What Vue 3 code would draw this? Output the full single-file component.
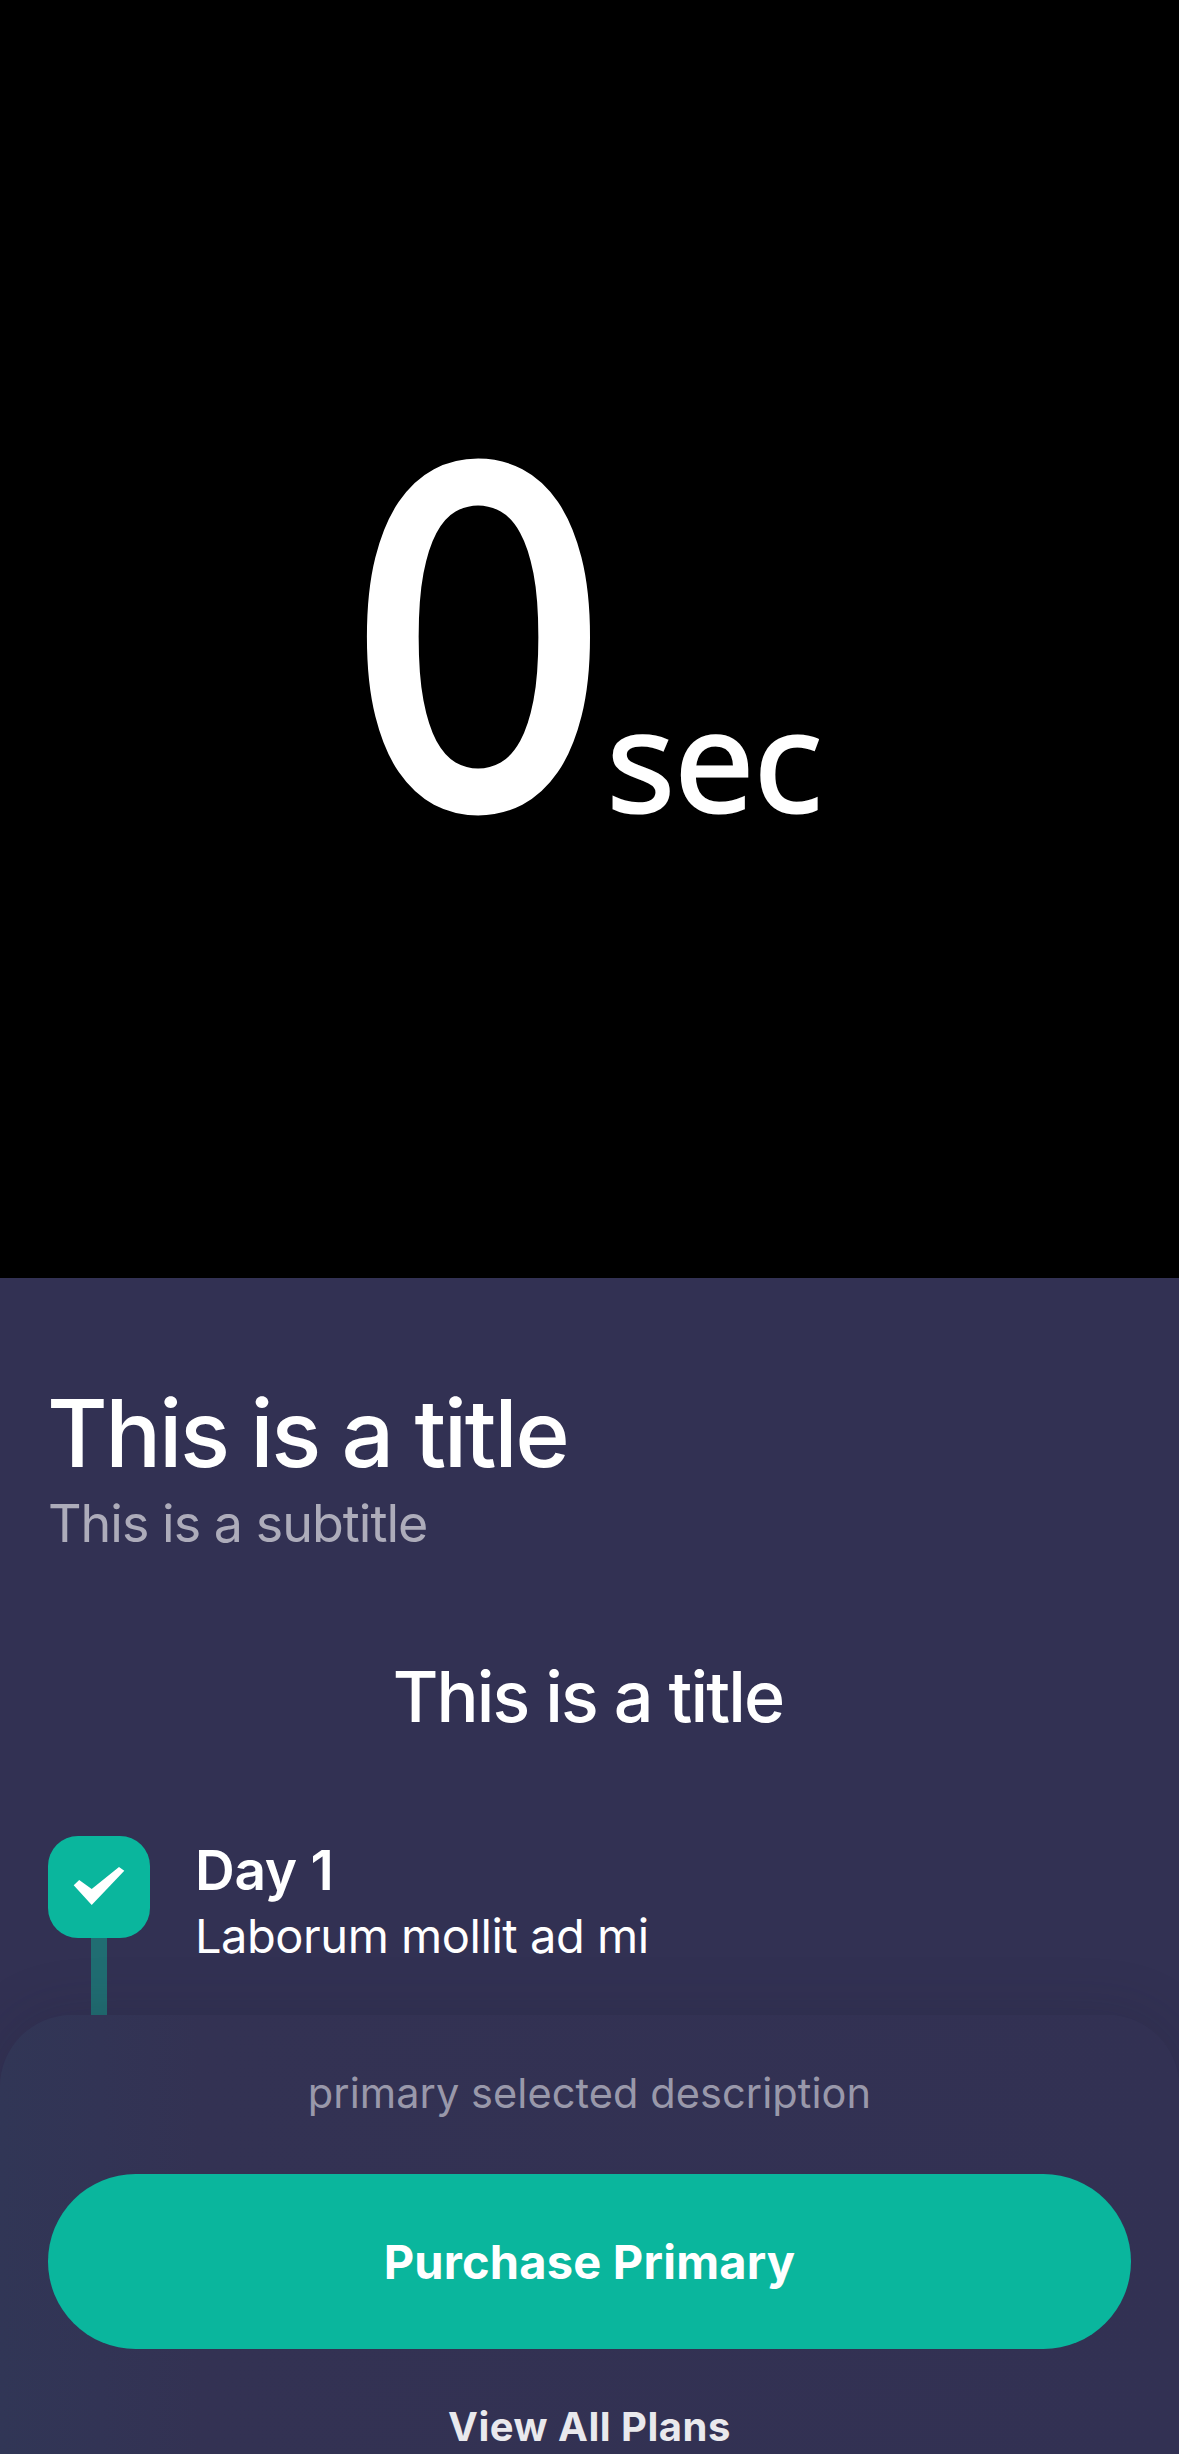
<script setup>
const steps = [{ title: 'Day 1', text: 'Laborum mollit ad mi' }]
</script>

<template>
  <main class="screen">
    <section class="media">
      <svg class="counter" viewBox="0 0 1179 1278" role="img" aria-label="0 sec">
        <text class="digit" x="355" y="813" textLength="247" lengthAdjust="spacingAndGlyphs">0</text>
        <text class="unit" x="607" y="812" textLength="215" lengthAdjust="spacingAndGlyphs">sec</text>
      </svg>
    </section>

    <section class="content">
      <h1 class="headline">This is a title</h1>
      <p class="subtitle">This is a subtitle</p>
      <h2 class="section-title">This is a title</h2>

      <div v-for="step in steps" :key="step.title" class="step">
        <div class="rail">
          <div class="badge">
            <svg viewBox="0 0 102 102" aria-hidden="true">
              <path d="M25.700 49.200 L31.200 44 L43.700 53 L71 31 L76.300 34.700 L43.700 69 Z" fill="#fff" />
            </svg>
          </div>
          <div class="line"></div>
        </div>
        <div class="step-copy">
          <h3>{{ step.title }}</h3>
          <p>{{ step.text }}</p>
        </div>
      </div>
    </section>

    <footer class="sheet">
      <p class="description">primary selected description</p>
      <button class="purchase" type="button"><span>Purchase Primary</span></button>
      <a class="plans"><span>View All Plans</span></a>
    </footer>
  </main>
</template>

<style>
body {
  margin: 0;
  background: #323153;
}
</style>

<style scoped>
.screen {
  position: relative;
  width: 1179px;
  height: 2454px;
  overflow: hidden;
  background: #323153;
  color: #fff;
  font-family: Inter, "Liberation Sans", sans-serif;
}
h1, h2, h3, p {
  margin: 0;
}
.media {
  height: 1278px;
  background: #000;
}
.counter {
  display: block;
  width: 1179px;
  height: 1278px;
  fill: #fff;
  font-family: "Open Sans", "Noto Sans", sans-serif;
}
.digit {
  font-family: Lato, "Open Sans", sans-serif;
  font-size: 487px;
  font-weight: 700;
  stroke: #000;
  stroke-width: 3px;
}
.unit {
  font-size: 139px;
  font-weight: 400;
  stroke: #fff;
  stroke-width: 3px;
}
.content {
  padding: 98px 48px 0;
}
.headline {
  margin-left: -1px;
  font-size: 93px;
  line-height: 115px;
  font-weight: 500;
  letter-spacing: -2.35px;
}
.subtitle {
  margin-top: 1px;
  font-size: 52px;
  line-height: 64px;
  letter-spacing: -0.98px;
  color: #adacba;
}
.section-title {
  margin-top: 98px;
  padding-right: 3px;
  text-align: center;
  font-size: 70px;
  line-height: 86px;
  font-weight: 500;
  letter-spacing: -1.85px;
}
.step {
  display: flex;
  gap: 45px;
  margin-top: 96px;
}
.rail {
  display: flex;
  flex-direction: column;
  align-items: center;
}
.badge {
  width: 102px;
  height: 102px;
  border-radius: 30px;
  background: #0ab69d;
}
.badge svg {
  display: block;
  width: 102px;
  height: 102px;
}
.line {
  width: 16px;
  height: 100px;
  background: #206d72;
}
.step-copy h3 {
  font-size: 55px;
  line-height: 68px;
  font-weight: 600;
  letter-spacing: -0.3px;
}
.step-copy p {
  margin-top: 3px;
  font-size: 47px;
  line-height: 58px;
  letter-spacing: -0.46px;
}
.sheet {
  position: absolute;
  left: 0;
  right: 0;
  bottom: 0;
  box-sizing: border-box;
  height: 439px;
  padding: 52px 48px 0;
  display: flex;
  flex-direction: column;
  align-items: center;
  border-radius: 72px 72px 0 0;
  background: linear-gradient(90deg, #313656 0, #323455 100px, #333253 200px, #323153 100%);
  box-shadow: 0 0 60px rgba(32, 36, 48, 0.2);
}
.description {
  font-size: 41.5px;
  line-height: 52px;
  letter-spacing: 0.08px;
  color: #9998aa;
}
.purchase {
  width: 100%;
  height: 175px;
  margin: 55px 0 0;
  padding: 0;
  display: flex;
  flex: none;
  align-items: center;
  justify-content: center;
  border: 0;
  border-radius: 88px;
  background: #0ab69d;
  color: #fff;
  font-family: inherit;
  font-size: 47px;
  line-height: 58px;
  font-weight: 650;
  letter-spacing: 0.2px;
}
.plans {
  margin-top: 53px;
  font-size: 40px;
  line-height: 50px;
  font-weight: 650;
  letter-spacing: 0.5px;
  color: #e9e9ed;
}
</style>
